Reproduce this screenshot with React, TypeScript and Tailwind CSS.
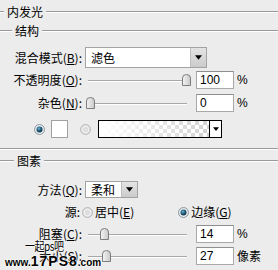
import React from 'react';

const cjk = '[font-family:"Noto_Sans_CJK_SC","Noto_Sans",sans-serif]';
const num = '[font-family:"Liberation_Sans",Arial,sans-serif]';

const Key: React.FC<{ k: string }> = ({ k }) => <span className="underline underline-offset-1">{k}</span>;

const Label: React.FC<{ text: string; k?: string }> = ({ text, k }) => (
    <div className="w-[82px] shrink-0 text-right whitespace-nowrap">
        {text}
        {k && (
            <>
                (<Key k={k} />)
            </>
        )}
        :
    </div>
);

const SectionHead: React.FC<{ title: string; lead: number; className?: string }> = ({ title, lead, className }) => (
    <div className={`flex items-center ${className ?? ''}`}>
        <div className="h-0 border-t border-[#9a9a9a] border-b border-b-white" style={{ width: lead }} />
        <span className="px-[3px] leading-none">{title}</span>
        <div className="flex-1 h-0 border-t border-[#9a9a9a] border-b border-b-white" />
    </div>
);

const Arrow: React.FC<{ size?: number }> = ({ size = 7 }) => (
    <svg width={size} height={Math.ceil(size / 2) + 1} viewBox="0 0 8 5">
        <path d="M0 0 H8 L4 5 Z" fill="#000" />
    </svg>
);

const Select: React.FC<{ value: string; width: string }> = ({ value, width }) => (
    <div className={`flex h-full ${width} border border-[#a3a3a3] bg-white`}>
        <div className="flex-1 flex items-center pl-[5px]">{value}</div>
        <div className="w-[16px] flex items-center justify-center bg-gradient-to-b from-[#e4e4e4] to-[#cbcbcb] border-l border-[#bdbdbd]">
            <Arrow />
        </div>
    </div>
);

const Slider: React.FC<{ pos: number }> = ({ pos }) => (
    <div className="relative w-[108px] h-full">
        <div className="absolute left-[3px] right-[6px] top-1/2 h-0 border-t border-[#a8a8a8] border-b border-b-white" />
        <svg className="absolute top-1/2 -translate-y-1/2" style={{ left: pos }} width="9" height="12" viewBox="0 0 9 12">
            <defs>
                <linearGradient id="th" x1="0" x2="1" y1="0" y2="0">
                    <stop offset="0" stopColor="#f4f4f4" />
                    <stop offset="1" stopColor="#c9c9c9" />
                </linearGradient>
            </defs>
            <path d="M0.5 11.5 V4 Q0.5 0.5 4.5 0.5 Q8.5 0.5 8.5 4 V11.5 Z" fill="url(#th)" stroke="#7d7d7d" />
        </svg>
    </div>
);

const NumBox: React.FC<{ value: string }> = ({ value }) => (
    <div className={`ml-[3px] w-[38px] h-full border border-[#a9a9a9] border-t-[#8f8f8f] bg-white flex items-center pl-[3px] ${num}`}>
        {value}
    </div>
);

const SliderRow: React.FC<{ text: string; k: string; pos: number; value: string; unit: string; className?: string }> = ({
    text,
    k,
    pos,
    value,
    unit,
    className,
}) => (
    <div className={`flex items-center h-[18px] ${className ?? ''}`}>
        <Label text={text} k={k} />
        <div className="ml-[3px] h-full">
            <Slider pos={pos} />
        </div>
        <NumBox value={value} />
        <span className={`ml-[3px] ${unit === '%' ? num : ''}`}>{unit}</span>
    </div>
);

const Radio: React.FC<{ on?: boolean }> = ({ on }) => (
    <svg width="11" height="11" viewBox="0 0 11 11" className="shrink-0">
        <defs>
            <radialGradient id="rOn" cx="0.4" cy="0.35" r="0.6">
                <stop offset="0" stopColor="#6fb3cf" />
                <stop offset="0.6" stopColor="#1e5e7c" />
                <stop offset="1" stopColor="#0f3a50" />
            </radialGradient>
        </defs>
        <circle cx="5.5" cy="5.5" r="5" fill={on ? '#e8e8e8' : '#dedede'} stroke={on ? '#8a9aa6' : '#b9b9b9'} />
        {on ? <circle cx="5.5" cy="5.5" r="3" fill="url(#rOn)" /> : <circle cx="5.5" cy="5.5" r="3.3" fill="none" stroke="#f3f3f3" />}
    </svg>
);

const GradientPreview: React.FC = () => (
    <div className="ml-[7px] flex w-[124px] shrink-0 h-full border border-black bg-white overflow-hidden">
        <div className="w-[110px] h-full shrink-0 overflow-hidden">
            <svg viewBox="0 0 110 16" preserveAspectRatio="none" className="w-full h-full">
                <defs>
                    <pattern id="chk" width="8" height="8" patternUnits="userSpaceOnUse">
                        <rect width="8" height="8" fill="#fff" />
                        <rect width="4" height="4" fill="#d2d2d2" />
                        <rect x="4" y="4" width="4" height="4" fill="#d2d2d2" />
                    </pattern>
                    <linearGradient id="fade" x1="0" x2="1">
                        <stop offset="0" stopColor="#fff" stopOpacity="1" />
                        <stop offset="1" stopColor="#fff" stopOpacity="0" />
                    </linearGradient>
                </defs>
                <rect width="110" height="16" fill="url(#chk)" />
                <rect width="110" height="16" fill="url(#fade)" />
            </svg>
        </div>
        <div className="w-[12px] shrink-0 border-l border-black flex items-center justify-center">
            <Arrow size={6} />
        </div>
    </div>
);

export default function App() {
    return (
        <div className={`relative w-[278px] h-[270px] overflow-hidden bg-[#ececec] text-[12px] leading-none text-black ${cjk}`}>
            <SectionHead title="内发光" lead={4} className="h-[24px]" />
            <SectionHead title="结构" lead={12} className="h-[14px]" />

            <div className="flex items-center h-[21px] mt-[9px]">
                <Label text="混合模式" k="B" />
                <div className="ml-[3px] h-full">
                    <Select value="滤色" width="w-[122px]" />
                </div>
            </div>

            <SliderRow text="不透明度" k="O" pos={97} value="100" unit="%" className="mt-[3px]" />
            <SliderRow text="杂色" k="N" pos={1} value="0" unit="%" className="mt-[5px]" />

            <div className="flex items-center h-[18px] mt-[8px] pl-[34px]">
                <Radio on />
                <div className="ml-[6px] w-[17px] h-full border border-[#a0a0a0] bg-white" />
                <div className="ml-[12px]">
                    <Radio />
                </div>
                <GradientPreview />
            </div>

            <div className="mt-[10px] h-0 border-t border-[#9a9a9a] border-b border-b-white" />

            <SectionHead title="图素" lead={14} className="h-[14px] mt-[4px]" />

            <div className="flex items-center h-[17px] mt-[13px]">
                <Label text="方法" k="Q" />
                <div className="ml-[3px] h-full">
                    <Select value="柔和" width="w-[53px]" />
                </div>
            </div>

            <div className="flex items-center h-[14px] mt-[7px]">
                <div className="w-[80px] text-right">源:</div>
                <div className="ml-[2px]">
                    <Radio />
                </div>
                <span className="ml-[2px]">
                    居中(<Key k="E" />)
                </span>
                <div className="ml-[44px]">
                    <Radio on />
                </div>
                <span className="ml-[2px]">
                    边缘(<Key k="G" />)
                </span>
            </div>

            <SliderRow text="阻塞" k="C" pos={15} value="14" unit="%" className="mt-[6px]" />
            <SliderRow text="大小" k="S" pos={17} value="27" unit="像素" className="mt-[4px]" />

            {/* site watermark stamped over the lower-left corner */}
            <div className="absolute left-[5px] top-[240px] leading-none [text-shadow:0_0_2px_#fff,0_0_2px_#fff,0_0_1px_#fff]">
                <div className="pl-[20px] text-[10px] tracking-[-0.5px] scale-y-[1.2] origin-top">一起ps吧</div>
                <div className={`mt-[4px] font-bold whitespace-nowrap ${num}`}>
                    <span className="text-[10px]">www.</span>
                    <span className="text-[14px] font-black tracking-[1px]">17PS8</span>
                    <span className="text-[10px]">.com</span>
                </div>
            </div>
        </div>
    );
}
